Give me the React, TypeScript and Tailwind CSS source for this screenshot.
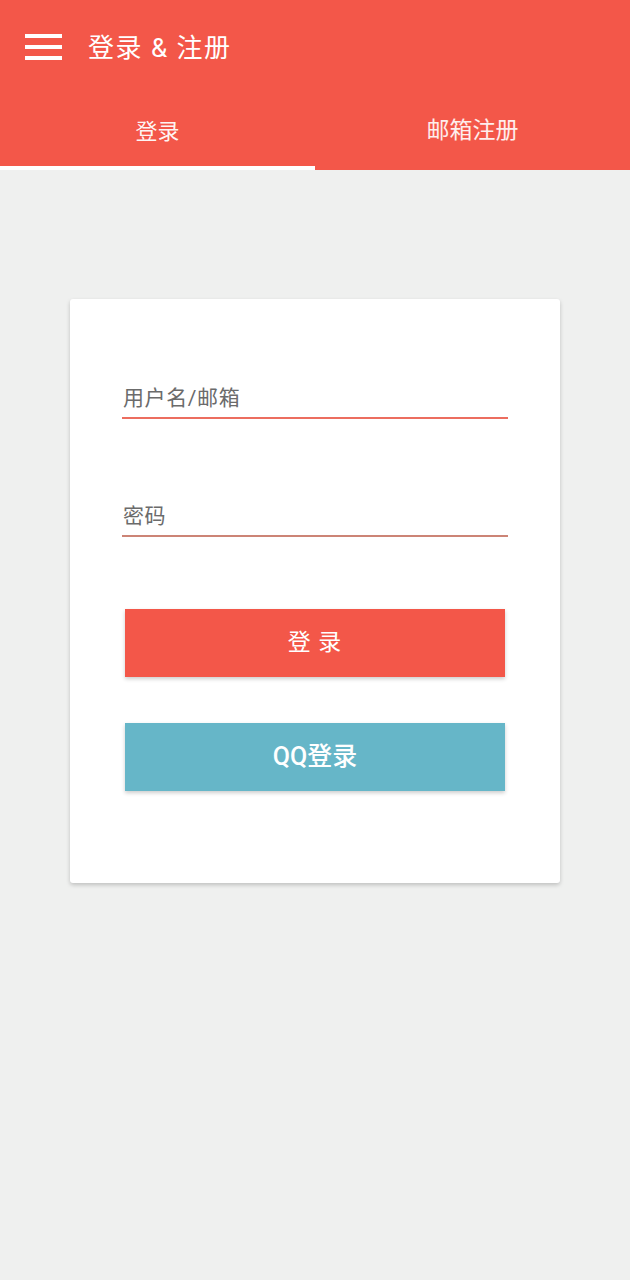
const font = "font-['Roboto','Noto_Sans_CJK_SC',sans-serif]";

export default function App() {
  return (
    <div className={`min-h-[1280px] bg-[#eff0ef] ${font}`}>
      {/* Header */}
      <header className="bg-[#f35749] text-white">
        <div className="flex h-[95px] items-center pl-[25px]">
          <svg width="37" height="26" viewBox="0 0 37 26" className="mt-[-2px]">
            <rect x="0" y="0" width="37" height="4" fill="#fff" />
            <rect x="0" y="11" width="37" height="4" fill="#fff" />
            <rect x="0" y="22" width="37" height="4" fill="#fff" />
          </svg>
          <h1 className="ml-[26px] text-[26px] leading-none tracking-[1.5px]">登录 &amp; 注册</h1>
        </div>
        <nav className="flex h-[75px]">
          <div className="relative flex flex-1 items-center justify-center">
            <span className="mt-[-2px] text-[22px] text-white/95">登录</span>
            <div className="absolute bottom-0 left-0 h-[4px] w-full bg-white" />
          </div>
          <div className="flex flex-1 items-center justify-center">
            <span className="mt-[-2px] text-[23px] text-white/90">邮箱注册</span>
          </div>
        </nav>
      </header>

      {/* Card */}
      <main className="flex justify-center pt-[129px]">
        <div className="h-[584px] w-[490px] rounded-[3px] bg-white px-[52px] pt-[84px] shadow-[0_2px_4px_rgba(0,0,0,0.2)]">
          <div className="border-b-2 border-[#ec6d5f] pb-[4px] pl-px">
            <span className="text-[21px] leading-[30px] tracking-[0.6px] text-[#6b6b6b]">用户名/邮箱</span>
          </div>
          <div className="mt-[82px] border-b-2 border-[#cc8476] pb-[4px] pl-px">
            <span className="text-[21px] leading-[30px] tracking-[0.6px] text-[#6b6b6b]">密码</span>
          </div>

          <div className="mt-[72px] flex flex-col gap-[46px] px-[3px]">
            <button className="h-[68px] w-full bg-[#f35749] text-[23px] tracking-[1px] text-white shadow-[0_2px_4px_rgba(0,0,0,0.2)]">
              登 录
            </button>
            <button className="h-[68px] w-full bg-[#66b6c8] text-[25px] font-medium text-white shadow-[0_2px_4px_rgba(0,0,0,0.2)]">
              QQ登录
            </button>
          </div>
        </div>
      </main>
    </div>
  );
}
